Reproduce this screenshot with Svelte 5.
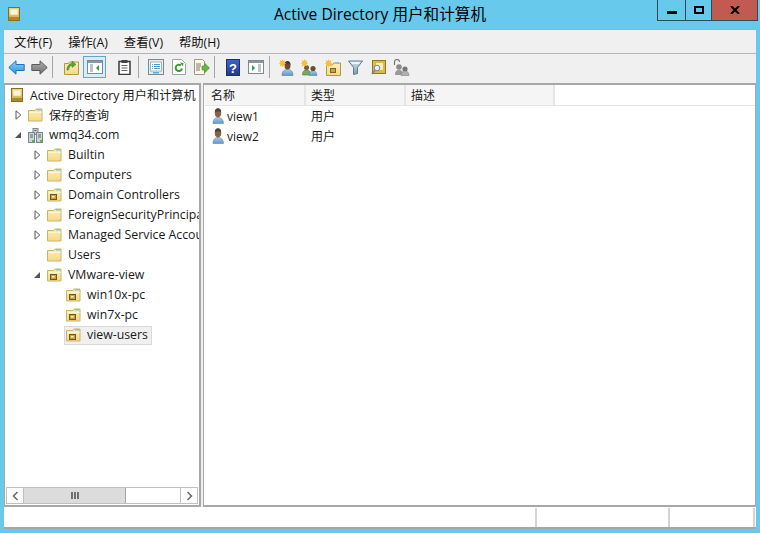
<script>
  const menus = ['文件(F)', '操作(A)', '查看(V)', '帮助(H)'];

  // indent = left offset of the arrow slot, arrow: open / closed / none
  const tree = [
    { name: '保存的查询', indent: 8, arrow: 'closed', icon: 'folder', cjk: true },
    { name: 'wmq34.com', indent: 8, arrow: 'open', icon: 'domain' },
    { name: 'Builtin', indent: 27, arrow: 'closed', icon: 'folder' },
    { name: 'Computers', indent: 27, arrow: 'closed', icon: 'folder' },
    { name: 'Domain Controllers', indent: 27, arrow: 'closed', icon: 'ou' },
    { name: 'ForeignSecurityPrincipals', indent: 27, arrow: 'closed', icon: 'folder' },
    { name: 'Managed Service Accounts', indent: 27, arrow: 'closed', icon: 'folder' },
    { name: 'Users', indent: 27, arrow: 'none', icon: 'folder' },
    { name: 'VMware-view', indent: 27, arrow: 'open', icon: 'ou' },
    { name: 'win10x-pc', indent: 46, arrow: 'none', icon: 'ou' },
    { name: 'win7x-pc', indent: 46, arrow: 'none', icon: 'ou' },
    { name: 'view-users', indent: 46, arrow: 'none', icon: 'ou', selected: true }
  ];

  const users = [
    { name: 'view1', type: '用户' },
    { name: 'view2', type: '用户' }
  ];
</script>

{#snippet book(size)}
  <svg width={size} height={size} viewBox="0 0 14 14">
    <rect x="1.500" y="0.500" width="11" height="13" fill="url(#gold)" stroke="#8a6d1f" />
    <rect x="2" y="10" width="10" height="3" fill="#a98a2c" />
    <rect x="3" y="2" width="8" height="6" fill="#fbf6d8" stroke="#d9c678" stroke-width=".6" />
  </svg>
{/snippet}

{#snippet folder(ou)}
  <svg width="15" height="14" viewBox="0 0 15 14">
    <path d="M.5 2.500h6.500l1-1.500h6v12h-13.500z" fill="url(#folderFill)" stroke="#cdb26a" />
    <rect x="9" y="1" width="4.500" height="1.500" fill="#7cc0ea" />
    <path d="M1.500 4.500h12" stroke="#fff6d0" />
    {#if ou}
      <rect x="3.500" y="6.500" width="6" height="5" fill="#c9a23c" stroke="#6f5a1e" />
      <rect x="5" y="8" width="2.500" height="1.500" fill="#fff3c0" />
    {/if}
  </svg>
{/snippet}

{#snippet domain()}
  <svg width="15" height="15" viewBox="0 0 15 15">
    <rect x="5" y="0.500" width="5" height="6" fill="#c4ccd0" stroke="#7b868c" />
    <rect x="0.500" y="4.500" width="6" height="10" fill="#ccd4d8" stroke="#7b868c" />
    <rect x="8.500" y="4.500" width="6" height="10" fill="#ccd4d8" stroke="#7b868c" />
    <path d="M2 7h3M2 9h3M10 7h3M10 9h3M6.500 2.500h2" stroke="#5d686e" />
    <rect x="4" y="12" width="2" height="2" fill="#57b947" />
    <rect x="12" y="12" width="2" height="2" fill="#57b947" />
  </svg>
{/snippet}

{#snippet user()}
  <svg width="15" height="16" viewBox="0 0 15 16">
    <path d="M2 15.500c0-4 2-6 5-6s5.500 2 5.500 6z" fill="url(#blueBody)" stroke="#5b88b4" stroke-width=".6" />
    <ellipse cx="7" cy="5" rx="3.200" ry="4.400" fill="#8a6244" />
    <path d="M3.800 4.500c0-3 1.400-4.300 3.200-4.300s3.200 1.300 3.200 4.300c-1-1.400-5.400-1.400-6.400 0z" fill="#4b4640" />
  </svg>
{/snippet}

{#snippet sparkle()}
  <path d="M3.500 0l.8 2 2-.8-.8 2.300 2 .8-2 .8.800 2.300-2-.8-.8 2-.8-2-2 .8.800-2.300-2-.8 2-.8-.8-2.300 2 .8z" fill="#f7bd3a" />
{/snippet}

<svg class="defs" width="0" height="0" aria-hidden="true">
  <defs>
    <linearGradient id="gold" x1="0" y1="0" x2="0" y2="1">
      <stop offset="0" stop-color="#f0dc90" />
      <stop offset="1" stop-color="#c9a84a" />
    </linearGradient>
    <linearGradient id="folderFill" x1="0" y1="0" x2="0" y2="1">
      <stop offset="0" stop-color="#fdf0bb" />
      <stop offset="1" stop-color="#f5d886" />
    </linearGradient>
    <linearGradient id="blueBody" x1="0" y1="0" x2="0" y2="1">
      <stop offset="0" stop-color="#a9cdeb" />
      <stop offset="1" stop-color="#5f95c8" />
    </linearGradient>
    <linearGradient id="backFill" x1="0" y1="0" x2="0" y2="1">
      <stop offset="0" stop-color="#8ed4f7" />
      <stop offset="1" stop-color="#2b8fdc" />
    </linearGradient>
    <linearGradient id="fwdFill" x1="0" y1="0" x2="0" y2="1">
      <stop offset="0" stop-color="#b0b0b0" />
      <stop offset="1" stop-color="#6e6e6e" />
    </linearGradient>
    <linearGradient id="helpFill" x1="0" y1="0" x2="0" y2="1">
      <stop offset="0" stop-color="#3f63c6" />
      <stop offset="1" stop-color="#22398c" />
    </linearGradient>
    <linearGradient id="funnelFill" x1="0" y1="0" x2="0" y2="1">
      <stop offset="0" stop-color="#cfe0ea" />
      <stop offset="1" stop-color="#7d9cb0" />
    </linearGradient>
  </defs>
</svg>

<div class="window">
  <header class="titlebar">
    <span class="app-icon">{@render book(14)}</span>
    <h1>Active Directory 用户和计算机</h1>
    <div class="controls">
      <button class="ctl min" aria-label="最小化"><i></i></button>
      <button class="ctl max" aria-label="最大化"><i></i></button>
      <button class="ctl close" aria-label="关闭">
        <svg width="10" height="8" viewBox="0 0 10 8"><path d="M1 0l8 8M9 0L1 8" stroke="#000" stroke-width="2" /></svg>
      </button>
    </div>
  </header>

  <div class="body">
    <nav class="menubar">
      {#each menus as m}<span>{m}</span>{/each}
    </nav>

    <div class="toolbar">
      <span class="tool">
        <svg width="17" height="15" viewBox="0 0 17 15"><path d="M.8 7.500L8 .8v3.700h8.200v6H8v3.700z" fill="url(#backFill)" stroke="#1f74b8" /></svg>
      </span>
      <span class="tool">
        <svg width="17" height="15" viewBox="0 0 17 15"><path d="M16.200 7.500L9 .8v3.700H.8v6H9v3.700z" fill="url(#fwdFill)" stroke="#5a5a5a" /></svg>
      </span>
      <span class="sep s-a"></span>
      <span class="tool">
        <svg width="15" height="16" viewBox="0 0 15 16">
          <path d="M.5 4.500h4l1-1.500h9v12.500H.5z" fill="url(#folderFill)" stroke="#b8953f" />
          <path d="M3 11c0-4 2-6.500 5-6.500V2l4 3.500L8 8.500V6.500c-1.800 0-3 1.500-3.500 4.500z" fill="#5aa82f" stroke="#3c7a1e" stroke-width=".5" />
        </svg>
      </span>
      <span class="tool active">
        <svg width="16" height="14" viewBox="0 0 16 14">
          <rect x=".5" y=".5" width="15" height="13" fill="#fff" stroke="#7d8a92" />
          <rect x="1" y="1" width="14" height="2" fill="#8c98a0" />
          <path d="M3 5h3M3 7h3M3 9h3M3 11h3" stroke="#7d8a92" />
          <path d="M12 5v6L9 8z" fill="#2a9a4f" />
        </svg>
      </span>
      <span class="tool gap">
        <svg width="13" height="15" viewBox="0 0 13 15">
          <rect x="1" y="1.500" width="11" height="13" fill="#fff" stroke="#3a3a3a" stroke-width="1.500" />
          <rect x="3.500" y="0" width="6" height="3" fill="#444" />
          <path d="M3.500 5.500h6M3.500 8h6M3.500 10.500h6" stroke="#666" />
        </svg>
      </span>
      <span class="sep s-b"></span>
      <span class="tool">
        <svg width="16" height="16" viewBox="0 0 16 16">
          <rect x=".5" y=".5" width="15" height="15" fill="#e6eaed" stroke="#7d8a92" />
          <rect x="2.500" y="3" width="11" height="9" fill="#fff" stroke="#aab4ba" />
          <path d="M4 5.500h1M4 7.500h1M4 9.500h1M6 5.500h6M6 7.500h6M6 9.500h6" stroke="#4a9bd8" />
          <rect x="5" y="13" width="6" height="1.500" fill="#3fb8e8" />
        </svg>
      </span>
      <span class="tool">
        <svg width="14" height="16" viewBox="0 0 14 16">
          <path d="M.5.500h9l4 4v11H.5z" fill="#fff" stroke="#9aa4aa" />
          <path d="M10 9.500a3.200 3.200 0 1 1-1-3" fill="none" stroke="#3d9a35" stroke-width="2" />
          <path d="M8 3.500l3.500.5-.5 3.500z" fill="#3d9a35" />
        </svg>
      </span>
      <span class="tool">
        <svg width="17" height="16" viewBox="0 0 17 16">
          <path d="M1.500.5h8l2 2v13h-10z" fill="#fff9e2" stroke="#9a9a86" />
          <path d="M3 5h5M3 7h5M3 9h4M3 11h4" stroke="#777" />
          <path d="M9 7h3V4.500L16.500 9 12 13.500V11H9z" fill="#65bb3f" stroke="#3f8a25" stroke-width=".6" />
        </svg>
      </span>
      <span class="sep s-c"></span>
      <span class="tool">
        <svg width="14" height="17" viewBox="0 0 14 17">
          <rect x=".5" y=".5" width="13" height="16" fill="url(#helpFill)" stroke="#1d2f70" />
          <text x="7" y="13.500" text-anchor="middle" font-size="13" font-weight="700" fill="#fff" font-family="Liberation Sans, sans-serif">?</text>
        </svg>
      </span>
      <span class="tool">
        <svg width="16" height="14" viewBox="0 0 16 14">
          <rect x=".5" y=".5" width="15" height="13" fill="#fff" stroke="#7d8a92" />
          <rect x="1" y="1" width="14" height="2" fill="#8c98a0" />
          <path d="M10 5h3M10 7h3M10 9h3M10 11h3" stroke="#7d8a92" />
          <path d="M4 5v6l3-3z" fill="#2a9a4f" />
        </svg>
      </span>
      <span class="sep s-d"></span>
      <span class="tool">
        <svg width="16" height="17" viewBox="0 0 16 17">
          <path d="M3 16.500c0-4 2-6 5.500-6s5.500 2 5.500 6z" fill="url(#blueBody)" stroke="#5b88b4" stroke-width=".7" />
          <ellipse cx="8.500" cy="6.500" rx="3" ry="4" fill="#6e4a30" />
          <path d="M5.500 6c0-3 1.300-4 3-4s3 1 3 4c-1-1.200-5-1.200-6 0z" fill="#3e3a36" />
          {@render sparkle()}
        </svg>
      </span>
      <span class="tool">
        <svg width="17" height="17" viewBox="0 0 17 17">
          <path d="M1.500 16c0-3 1-5 4-5s4 2 4 5z" fill="#76a85e" stroke="#4f7a3c" stroke-width=".6" />
          <circle cx="5.500" cy="8.500" r="2.500" fill="#6e5a3a" />
          <path d="M8 16.500c0-3 1.500-4.500 4-4.500s4 1.500 4 4.500z" fill="url(#blueBody)" stroke="#5b88b4" stroke-width=".6" />
          <circle cx="12" cy="9.500" r="2.600" fill="#6e4a30" />
          {@render sparkle()}
        </svg>
      </span>
      <span class="tool">
        <svg width="16" height="17" viewBox="0 0 16 17">
          <path d="M1.500 6h6l1-2h7v12.500h-14z" fill="url(#folderFill)" stroke="#b8953f" />
          <rect x="10" y="3.500" width="4" height="1.500" fill="#7cc0ea" />
          <rect x="5.500" y="9.500" width="5" height="4" fill="#c9a23c" stroke="#7d6420" />
          {@render sparkle()}
        </svg>
      </span>
      <span class="tool">
        <svg width="15" height="15" viewBox="0 0 15 15">
          <path d="M.5 1h14l-5 6.500v6l-4 1v-7z" fill="url(#funnelFill)" stroke="#607e92" />
          <path d="M2.500 2h10l-1.500 2H4z" fill="#eef5f9" />
        </svg>
      </span>
      <span class="tool">
        <svg width="15" height="15" viewBox="0 0 15 15">
          <rect x="1.500" y=".5" width="13" height="13" fill="#d8b94c" stroke="#94762a" />
          <rect x="5" y="3" width="7" height="7" fill="#f6eebc" />
          <circle cx="6" cy="8" r="2.800" fill="#e8f2f8" stroke="#75858e" />
          <path d="M4 10.500L.8 14" stroke="#75858e" stroke-width="1.500" />
        </svg>
      </span>
      <span class="tool">
        <svg width="17" height="17" viewBox="0 0 17 17">
          <path d="M1.500 6V3a2.500 2.500 0 0 1 5 0" fill="none" stroke="#777" stroke-width="1.200" />
          <circle cx="6" cy="8" r="2.800" fill="#8a8a8a" />
          <path d="M2 16c0-3 1-5 4-5s4 2 4 5z" fill="#9a9a9a" />
          <circle cx="12" cy="10" r="2.600" fill="#777" />
          <path d="M8 16.500c0-3 1.500-4.500 4-4.500s4 1.500 4 4.500z" fill="#b0b0b0" stroke="#777" stroke-width=".5" />
        </svg>
      </span>
    </div>

    <div class="panes">
      <aside class="tree-pane">
        <div class="tree">
          <div class="row root">
            <span class="root-icon">{@render book(14)}</span>
            <span class="root-label">Active Directory 用户和计算机</span>
          </div>
          {#each tree as item}
            <div class="row" style="padding-left: {item.indent}px">
              <span class="arrow">
                {#if item.arrow === 'closed'}
                  <svg width="7" height="10" viewBox="0 0 7 10"><path d="M1 .8L5.800 5 1 9.200z" fill="#fff" stroke="#555" /></svg>
                {:else if item.arrow === 'open'}
                  <svg width="8" height="8" viewBox="0 0 8 8"><path d="M7 1v6H1z" fill="#555" /></svg>
                {/if}
              </span>
              <span class="item" class:selected={item.selected}>
                {#if item.icon === 'domain'}
                  {@render domain()}
                {:else}
                  {@render folder(item.icon === 'ou')}
                {/if}
                <span class="label" class:cjk={item.cjk}>{item.name}</span>
              </span>
            </div>
          {/each}
        </div>
        <div class="hscroll">
          <span class="sb-btn">
            <svg width="7" height="10" viewBox="0 0 7 10"><path d="M5.500 1L1.500 5l4 4" fill="none" stroke="#666" stroke-width="1.500" /></svg>
          </span>
          <div class="track">
            <div class="thumb"><i></i><i></i><i></i></div>
          </div>
          <span class="sb-btn">
            <svg width="7" height="10" viewBox="0 0 7 10"><path d="M1.500 1l4 4-4 4" fill="none" stroke="#666" stroke-width="1.500" /></svg>
          </span>
        </div>
      </aside>

      <section class="list-pane">
        <div class="list-head">
          <span class="col c1">名称</span>
          <span class="col c2">类型</span>
          <span class="col c3">描述</span>
        </div>
        {#each users as u}
          <div class="list-row">
            <span class="cell c1">{@render user()}<span>{u.name}</span></span>
            <span class="cell c2">{u.type}</span>
          </div>
        {/each}
      </section>
    </div>

    <footer class="status">
      <span class="s1"></span>
      <span class="s2"></span>
      <span class="s3"></span>
    </footer>
  </div>
</div>

<style>
  :global(body) {
    margin: 0;
    background: #67c9eb;
  }

  .defs {
    display: block;
  }

  .window {
    width: 760px;
    height: 533px;
    display: flex;
    flex-direction: column;
    background: #67c9eb;
    font-family: "Open Sans", "Noto Sans CJK SC", sans-serif;
    font-size: 12px;
    color: #1a1a1a;
    overflow: hidden;
  }

  .titlebar {
    height: 29px;
    flex: none;
    display: flex;
    align-items: flex-start;
    position: relative;
  }

  .app-icon {
    margin: 7px 0 0 7px;
    display: flex;
  }

  .titlebar h1 {
    position: absolute;
    left: 0;
    right: 0;
    top: 4px;
    margin: 0;
    text-align: center;
    font-size: 15.6px;
    font-weight: 400;
    line-height: 20px;
    color: #000;
  }

  .controls {
    position: absolute;
    top: 0;
    left: 657px;
    display: flex;
    height: 21px;
    border: 1px solid #2f4a58;
    border-top: none;
    box-sizing: border-box;
  }

  .ctl {
    padding: 0;
    border: none;
    background: none;
    display: flex;
    align-items: center;
    justify-content: center;
    height: 20px;
  }

  .ctl.min { width: 28px; border-right: 1px solid #2f4a58; }
  .ctl.max { width: 26px; border-right: 1px solid #2f4a58; }
  .ctl.close { width: 45px; background: #c15a50; }

  .min i { width: 10px; height: 3px; background: #000; margin-top: 5px; }
  .max i { width: 6px; height: 4px; border: 2px solid #000; }

  .body {
    flex: 1;
    margin: 0 4px 4px;
    display: flex;
    flex-direction: column;
    background: #f0f0f0;
    border-top: 1px solid #8fb4c4;
    min-height: 0;
  }

  .menubar {
    height: 23px;
    flex: none;
    display: flex;
    align-items: center;
    padding-left: 10px;
    gap: 16px;
    border-bottom: 1px solid #b4b4c0;
    color: #111;
    font-size: 12.3px;
  }

  .toolbar {
    height: 29px;
    flex: none;
    display: flex;
    align-items: flex-start;
    padding: 2px 0 0 1px;
    box-sizing: border-box;
  }

  .tool {
    width: 23px;
    height: 22px;
    display: flex;
    align-items: center;
    justify-content: center;
    box-sizing: border-box;
  }

  .tool.active {
    background: #d9ecf9;
    border: 1px solid #5aa8dc;
  }

  .tool.gap { margin-left: 7px; }

  .sep {
    width: 1px;
    height: 22px;
    background: #a6a6a6;
  }

  .s-a { margin: 0 7px 0 1px; }
  .s-b { margin: 0 5px 0 2px; }
  .s-c { margin: 0 6px 0 1px; }
  .s-d { margin: 0 5px 0 2px; }

  .panes {
    flex: 1;
    display: flex;
    gap: 2px;
    min-height: 0;
  }

  .tree-pane {
    width: 197px;
    flex: none;
    box-sizing: border-box;
    display: flex;
    flex-direction: column;
    background: #fff;
    border-style: solid;
    border-color: #a8a8a8;
    border-width: 2px 2px 2px 1px;
    overflow: hidden;
  }

  .tree {
    flex: 1;
    overflow: hidden;
  }

  .row {
    height: 20px;
    display: flex;
    align-items: center;
    white-space: nowrap;
  }

  .row.root {
    padding-left: 5px;
    gap: 6px;
  }

  .root-icon {
    display: flex;
  }

  .root-label {
    font-size: 12.2px;
    margin-top: -1px;
  }

  .arrow {
    width: 10px;
    flex: none;
    display: flex;
    justify-content: center;
  }

  .item {
    display: flex;
    align-items: center;
    gap: 6px;
    height: 17px;
    margin-left: 3px;
    padding: 0 3px 0 1px;
    border: 1px solid transparent;
  }

  .item.selected {
    background: #f0f0f0;
    border-color: #d9d9d9;
  }

  .label {
    font-size: 12.3px;
    margin-top: -1px;
  }

  .label.cjk {
    font-size: 12px;
  }

  .hscroll {
    height: 15px;
    flex: none;
    margin: 0 1px 1px 1px;
    display: flex;
    border: 1px solid #c0c0c0;
    background: #fff;
  }

  .sb-btn {
    width: 16px;
    flex: none;
    display: flex;
    align-items: center;
    justify-content: center;
  }

  .track {
    flex: 1;
    border-left: 1px solid #c0c0c0;
    border-right: 1px solid #c0c0c0;
  }

  .thumb {
    width: 101px;
    height: 100%;
    background: #dcdcdc;
    border-right: 1px solid #a6a6a6;
    display: flex;
    align-items: center;
    justify-content: center;
    gap: 1px;
  }

  .thumb i {
    width: 2px;
    height: 7px;
    background: #707070;
  }

  .list-pane {
    flex: 1;
    box-sizing: border-box;
    background: #fff;
    border-style: solid;
    border-color: #a8a8a8;
    border-width: 2px 1px 2px 1px;
    min-width: 0;
  }

  .list-head {
    height: 21px;
    display: flex;
    margin-left: 1px;
    border-bottom: 1px solid #e5e5e5;
    box-sizing: border-box;
    color: #222;
  }

  .col {
    box-sizing: border-box;
    padding-left: 5px;
    line-height: 22px;
    background: #f5f5f5;
    border-right: 2px solid #e5e5e5;
  }

  .col.c1 { padding-left: 6px; }

  .c1 { width: 101px; }
  .c2 { width: 100px; }
  .c3 { width: 149px; }

  .list-row {
    height: 20px;
    display: flex;
    align-items: center;
    padding-left: 1px;
  }

  .cell {
    box-sizing: border-box;
    padding-left: 5px;
    display: flex;
    align-items: center;
  }

  .cell.c1 {
    padding-left: 6px;
    gap: 1px;
  }

  .status {
    height: 22px;
    flex: none;
    display: flex;
    background: #fff;
    border-bottom: 2px solid #a6a6a6;
    box-sizing: border-box;
  }

  .status span {
    border-right: 2px solid #d4d4d4;
    margin-top: 1px;
  }

  .s1 { flex: 1; }
  .s2 { width: 131px; }
  .s3 { width: 83px; margin-right: 1px; }
</style>
